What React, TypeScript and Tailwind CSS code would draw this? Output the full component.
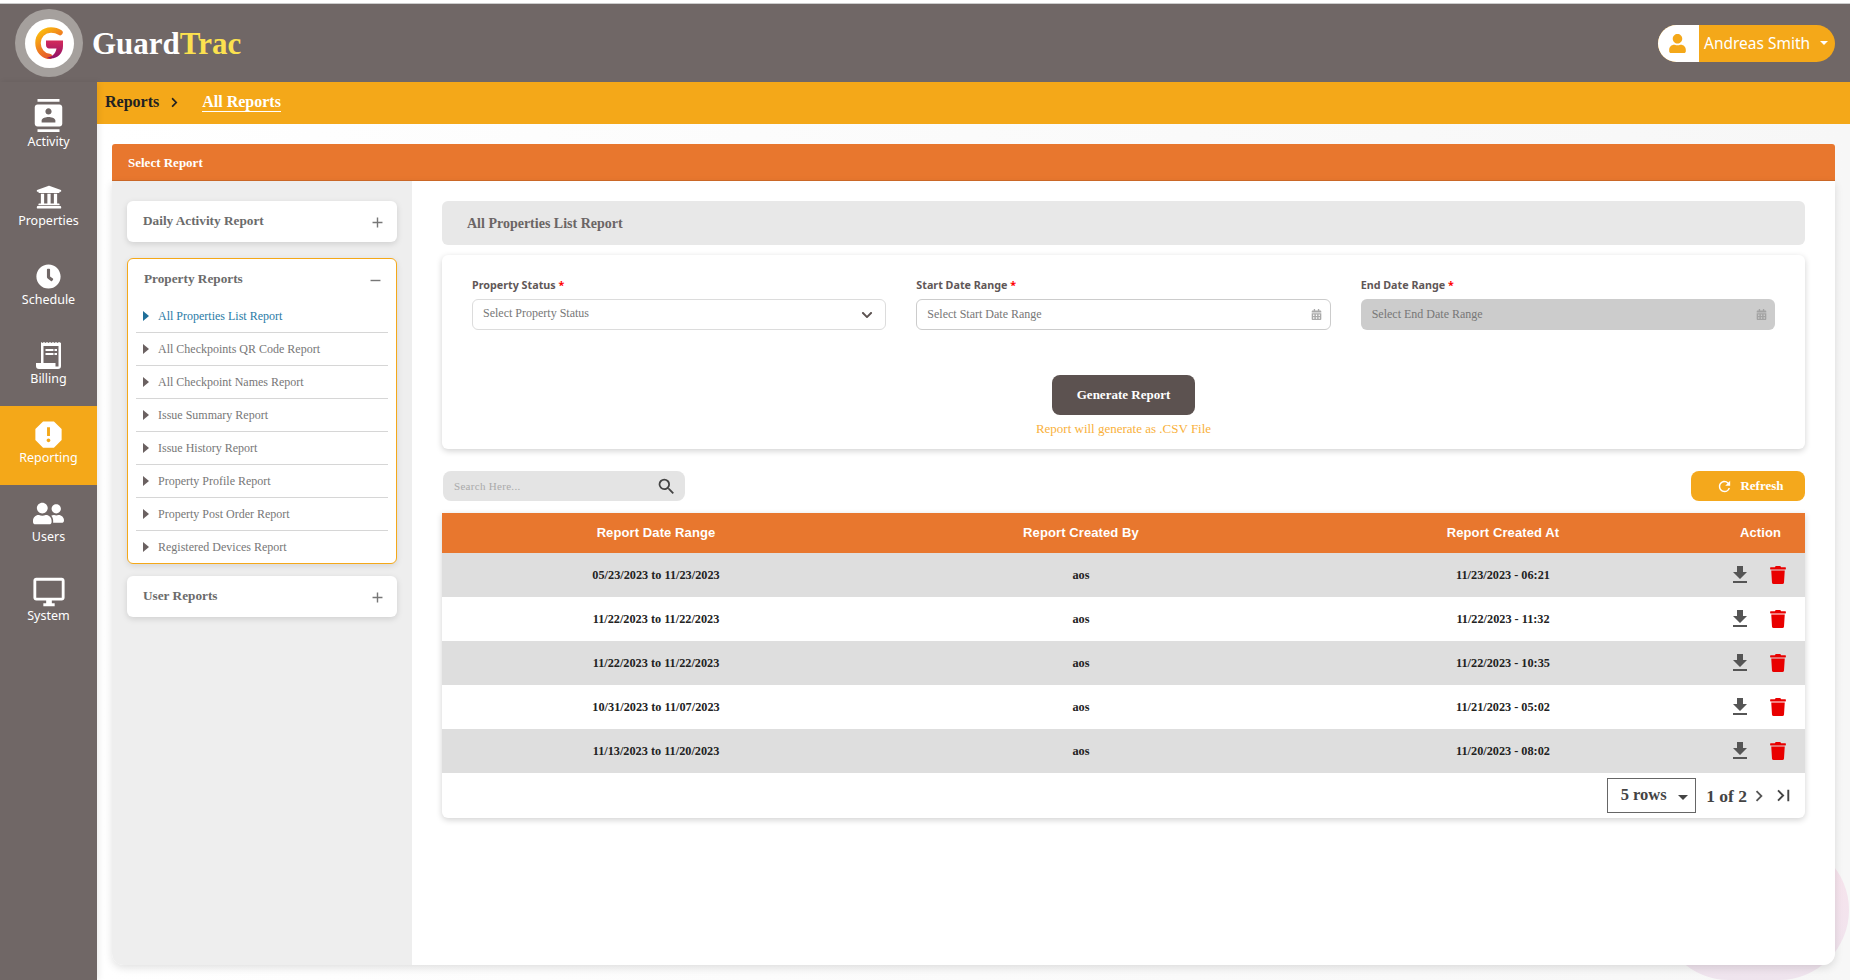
import React from 'react';
import { MdContacts, MdReport, MdOutlineDesktopWindows, MdFileDownload, MdRefresh, MdSearch, MdAdd, MdRemove, MdChevronRight, MdLastPage } from 'react-icons/md';
import { FaUniversity, FaClock, FaUserFriends, FaTrash, FaChevronDown, FaChevronRight, FaCalendarAlt, FaUser } from 'react-icons/fa';

function BillingIcon() {
  return (
    <svg width="27" height="27" viewBox="0 0 27 27">
      <path fill="#fff" d="M6 0l1.5 1L9 0l1.5 1L12 0l1.5 1L15 0l1.5 1L18 0l1.5 1L21 0l1.5 1L24 0l2 1v23a3 3 0 0 1-3 3H4a3 3 0 0 1-3-3v-3h5z" />
      <path fill="#706766" d="M8.500 4h15v20.500h-3V21h-12z" />
      <path fill="#fff" d="M10.500 7h8v2h-8zM19.500 7h2.500v2h-2.500zM10.500 11h8v2h-8zM19.500 11h2.500v2h-2.500z" />
    </svg>
  );
}

function GLogo() {
  return (
    <svg width="28" height="32" viewBox="0 0 28 32">
      <defs>
        <linearGradient id="ring" x1="0" y1="0" x2="0.6" y2="1">
          <stop offset="0" stopColor="#fcc30b" />
          <stop offset="0.55" stopColor="#f0811f" />
          <stop offset="1" stopColor="#e4572e" />
        </linearGradient>
        <linearGradient id="bar" x1="0" y1="0" x2="0" y2="1">
          <stop offset="0" stopColor="#d42a5b" />
          <stop offset="1" stopColor="#8f1169" />
        </linearGradient>
      </defs>
      <path d="M25 5.500C22 3.500 19.500 3 16 3 8.500 3 3 8.800 3 16c0 7 5 13 11.500 13.500" fill="none" stroke="url(#ring)" strokeWidth="5.500" strokeLinecap="round" />
      <path d="M11 13.500h17V19c0 7.500-5.500 12.500-12 12.500-1.500 0-3-.3-4-.8 4.500-.7 8.500-3.700 9.500-9.200H14c-1.500 0-3-1.200-3-3.500z" fill="url(#bar)" />
    </svg>
  );
}

const navItems = [
  { label: 'Activity', icon: <MdContacts size={33} className="-mt-[5px]" /> },
  { label: 'Properties', icon: <FaUniversity size={26} /> },
  { label: 'Schedule', icon: <FaClock size={25} /> },
  { label: 'Billing', icon: <BillingIcon /> },
  { label: 'Reporting', icon: <MdReport size={35} />, active: true },
  { label: 'Users', icon: <FaUserFriends size={31} /> },
  { label: 'System', icon: <MdOutlineDesktopWindows size={34} /> },
];

const propertyReports = [
  'All Properties List Report',
  'All Checkpoints QR Code Report',
  'All Checkpoint Names Report',
  'Issue Summary Report',
  'Issue History Report',
  'Property Profile Report',
  'Property Post Order Report',
  'Registered Devices Report',
];

const rows = [
  ['05/23/2023 to 11/23/2023', 'aos', '11/23/2023 - 06:21'],
  ['11/22/2023 to 11/22/2023', 'aos', '11/22/2023 - 11:32'],
  ['11/22/2023 to 11/22/2023', 'aos', '11/22/2023 - 10:35'],
  ['10/31/2023 to 11/07/2023', 'aos', '11/21/2023 - 05:02'],
  ['11/13/2023 to 11/20/2023', 'aos', '11/20/2023 - 08:02'],
];

function CollapsedCard({ title }: { title: string }) {
  return (
    <div className="flex h-[41px] items-center justify-between rounded-md bg-white pl-4 pr-[11px] shadow-[0_2px_6px_rgba(0,0,0,0.13)]">
      <span className="-mt-[2px] text-[13.25px] font-bold text-[#6b6b6b]">{title}</span>
      <MdAdd size={17} className="mt-[2px] text-[#777]" />
    </div>
  );
}

function FieldLabel({ text }: { text: string }) {
  return (
    <div className="mb-[7px] h-[13px] font-['Noto_Sans',sans-serif] text-[10.75px] leading-[13px] font-bold text-[#5f5757]">
      {text} <span className="text-[#f00]">*</span>
    </div>
  );
}

export default function App() {
  return (
    <div className="flex h-screen w-full flex-col overflow-hidden bg-white font-['Liberation_Serif',serif]">
      <div className="h-[4px] shrink-0 border-b border-[#ccc] bg-white" />
      <header className="flex h-[78px] shrink-0 items-center justify-between bg-[#706766] pl-[15px] pr-[15px]">
        <div className="flex items-center">
          <div className="flex h-[68px] w-[68px] items-center justify-center rounded-full bg-[#a5a09d]">
            <div className="flex h-[49px] w-[49px] items-center justify-center rounded-full bg-white">
              <GLogo />
            </div>
          </div>
          <div className="mt-[2px] ml-[9px] text-[31px] font-bold text-white">
            Guard<span className="text-[#fbe14f]">Trac</span>
          </div>
        </div>
        <div className="flex h-[37px] w-[177px] items-center rounded-full bg-[#f4a819] font-['Noto_Sans',sans-serif] text-white">
          <div className="flex h-[37px] w-[41px] items-center justify-center rounded-l-full rounded-tr-[16px] rounded-br-[30px] bg-white pr-[3px] text-[#f4a819]">
            <FaUser size={19} />
          </div>
          <span className="mt-[1px] ml-[5px] text-[15.5px]">Andreas Smith</span>
          <span className="ml-[10px] border-x-[4px] border-t-[4px] border-x-transparent border-t-white" />
        </div>
      </header>

      <div className="flex min-h-0 flex-1">
        <nav className="relative z-10 w-[97px] shrink-0 bg-[#706766] pt-[8px] font-['Noto_Sans',sans-serif] text-white shadow-[2px_0_6px_rgba(0,0,0,0.08)]">
          {navItems.map((item) => (
            <div key={item.label} className={`flex h-[79px] flex-col items-center ${item.active ? 'bg-[#f4a819]' : ''}`}>
              <div className="mt-[11px] flex h-[34px] items-center justify-center">{item.icon}</div>
              <div className="mt-[1px] h-[12px] text-[12.5px] leading-[12px]">{item.label}</div>
            </div>
          ))}
        </nav>

        <main className="flex min-w-0 flex-1 flex-col">
          <div className="flex h-[42px] shrink-0 items-center bg-[#f4a819] pb-[2px] pl-[8px] text-[16px] font-bold">
            <span className="text-[#222]">Reports</span>
            <FaChevronRight size={11} className="ml-[10px] text-[#222]" />
            <span className="ml-[22px] border-b border-white leading-[18px] text-white">All Reports</span>
          </div>

          <div className="relative min-h-0 flex-1 bg-gradient-to-r from-white to-[#f7f7f7] px-[15px] pt-[20px]">
            {/* faint blob behind the panel, bottom right */}
            <div className="absolute top-[716px] right-[1px] h-[140px] w-[190px] rounded-[70px] bg-gradient-to-b from-[#f8e3ec] to-[#efe4ee]" />

            <div className="relative flex h-[821px] flex-col">
              <div className="flex h-[37px] shrink-0 items-center rounded-t-[3px] border-b border-[#cf6a28] bg-[#e8772e] pt-[2px] pl-4 text-[13px] font-bold text-white">
                Select Report
              </div>
              <div className="flex min-h-0 flex-1 rounded-b-[12px] shadow-[0_3px_8px_rgba(0,0,0,0.12)]">
                <aside className="flex w-[300px] shrink-0 flex-col rounded-bl-[12px] bg-[#eeeeee] px-[15px] pt-[20px]">
                  <CollapsedCard title="Daily Activity Report" />
                  <div className="mt-[16px] h-[306px] rounded-md border-[1.5px] border-[#f4a819] bg-white px-[8px] shadow-[0_2px_6px_rgba(0,0,0,0.1)]">
                    <div className="flex h-[41px] items-center justify-between pl-[8px] pr-[4px]">
                      <span className="-mt-[2px] text-[13.25px] font-bold text-[#6b6b6b]">Property Reports</span>
                      <MdRemove size={17} className="mt-[2px] text-[#777]" />
                    </div>
                    {propertyReports.map((name, i) => {
                      const last = i === propertyReports.length - 1;
                      return (
                        <div
                          key={name}
                          className={`flex h-[33px] items-center pl-[7px] ${last ? 'pb-[1px]' : 'border-b border-[#d6d6d6]'} ${i === 0 ? 'text-[#2a7ba6]' : 'text-[#777]'}`}
                        >
                          <span className={`border-y-[5px] border-l-[6px] border-y-transparent ${i === 0 ? 'border-l-[#1f6f99]' : 'border-l-[#6b6161]'}`} />
                          <span className="ml-[9px] text-[12px]">{name}</span>
                        </div>
                      );
                    })}
                  </div>
                  <div className="mt-[12px]">
                    <CollapsedCard title="User Reports" />
                  </div>
                </aside>

                <section className="min-w-0 flex-1 rounded-br-[12px] bg-white px-[30px] pt-[20px]">
                  <div className="flex h-[44px] items-center rounded-md bg-[#e8e8e8] pl-[25px] text-[14px] font-bold text-[#6b6565]">
                    All Properties List Report
                  </div>

                  <div className="mt-[10px] h-[194px] rounded-md bg-white px-[30px] pt-[24px] shadow-[0_2px_6px_rgba(0,0,0,0.18)]">
                    <div className="grid grid-cols-3 gap-[30px]">
                      <div>
                        <FieldLabel text="Property Status" />
                        <div className="flex h-[31px] items-center justify-between rounded-md border border-[#dcdcdc] pl-[10px] pr-[12px] text-[12px] text-[#777]">
                          <span className="-mt-[3px]">Select Property Status</span>
                          <FaChevronDown size={12} className="text-[#5c5250]" />
                        </div>
                      </div>
                      <div>
                        <FieldLabel text="Start Date Range" />
                        <div className="flex h-[31px] items-center justify-between rounded-md border border-[#ccc] pl-[10px] pr-[8px]">
                          <input placeholder="Select Start Date Range" className="-mt-[1px] min-w-0 flex-1 bg-transparent text-[12px] outline-none placeholder:text-[#777]" />
                          <FaCalendarAlt size={11} className="text-[#aaa]" />
                        </div>
                      </div>
                      <div>
                        <FieldLabel text="End Date Range" />
                        <div className="flex h-[31px] items-center justify-between rounded-md bg-[#cccccc] pl-[11px] pr-[8px]">
                          <input disabled placeholder="Select End Date Range" className="-mt-[1px] min-w-0 flex-1 bg-transparent text-[12px] outline-none placeholder:text-[#777]" />
                          <FaCalendarAlt size={11} className="text-[#a3a3a3]" />
                        </div>
                      </div>
                    </div>
                    <div className="mt-[45px] flex flex-col items-center">
                      <button className="h-[40px] w-[143px] rounded-lg bg-[#5c5250] text-[13px] font-bold text-white">Generate Report</button>
                      <div className="mt-[6px] text-[13px] leading-[15px] text-[#f9b13c]">Report will generate as .CSV File</div>
                    </div>
                  </div>

                  <div className="mt-[22px] flex items-center justify-between">
                    <div className="ml-[1px] flex h-[30px] w-[242px] items-center rounded-lg bg-[#e4e4e4] pl-[11px] pr-[8px]">
                      <input placeholder="Search Here..." className="min-w-0 flex-1 bg-transparent text-[11px] tracking-[0.3px] outline-none placeholder:text-[#aaa]" />
                      <MdSearch size={21} className="text-[#444]" />
                    </div>
                    <button className="flex h-[30px] w-[114px] items-center justify-center rounded-lg bg-[#f4a81c] pl-[4px] text-[13px] font-bold text-white">
                      <MdRefresh size={17} />
                      <span className="ml-[7px]">Refresh</span>
                    </button>
                  </div>

                  <div className="mt-[12px] rounded-b-md bg-white shadow-[0_2px_6px_rgba(0,0,0,0.18)]">
                    <div className="grid h-[40px] grid-cols-[428px_422px_422px_1fr] items-center bg-[#e8772e] text-center font-['Liberation_Sans',sans-serif] text-[13px] font-bold tracking-[0.1px] text-white">
                      <div>Report Date Range</div>
                      <div>Report Created By</div>
                      <div>Report Created At</div>
                      <div className="pl-[2px]">Action</div>
                    </div>
                    {rows.map((row, i) => (
                      <div
                        key={i}
                        className={`grid h-[44px] grid-cols-[428px_422px_422px_1fr] items-center text-center text-[12.25px] font-bold text-[#222] ${i % 2 === 0 ? 'bg-[#dedede]' : 'bg-white'}`}
                      >
                        <div>{row[0]}</div>
                        <div>{row[1]}</div>
                        <div>{row[2]}</div>
                        <div className="flex items-center pl-[14px]">
                          <MdFileDownload size={24} className="text-[#555]" />
                          <FaTrash size={18} className="ml-[17px] text-[#e90000]" />
                        </div>
                      </div>
                    ))}
                    <div className="flex h-[45px] items-center justify-end pr-[10px] text-[17.5px] font-bold text-[#444]">
                      <div className="flex h-[35px] w-[89px] items-center border-[1.5px] border-[#666] pl-[12.5px]">
                        <span className="-mt-[1px] text-[16.5px]">5 rows</span>
                        <span className="mt-[3px] ml-[11px] border-x-[5px] border-t-[5px] border-x-transparent border-t-[#444]" />
                      </div>
                      <span className="mt-[1px] ml-[10px]">1 of 2</span>
                      <MdChevronRight size={22} className="ml-[1px] text-[#555]" />
                      <MdLastPage size={23} className="ml-[2px] text-[#444]" />
                    </div>
                  </div>
                </section>
              </div>
            </div>
          </div>
        </main>
      </div>
    </div>
  );
}
